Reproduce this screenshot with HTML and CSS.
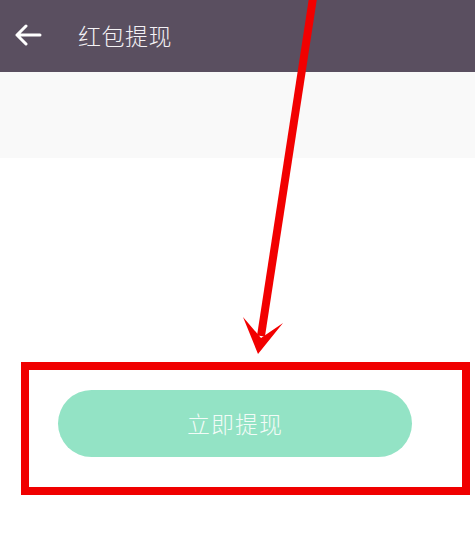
FILE: index.html
```html
<!DOCTYPE html>
<html lang="zh">
<head>
<meta charset="utf-8">
<link rel="stylesheet" href="styles.css">
</head>
<body>
<div class="page">
  <header class="topbar">
    <svg class="back" width="28" height="22" viewBox="0 0 28 22">
      <path d="M26 11H3M12 2L3 11L12 20" fill="none" stroke="#fff" stroke-width="3" stroke-linecap="round" stroke-linejoin="round"/>
    </svg>
    <h1 class="title">红包提现</h1>
  </header>
  <div class="band"></div>
  <main class="content">
    <div class="highlight">
      <button class="btn">立即提现</button>
    </div>
  </main>
  <svg class="annot" width="475" height="536" viewBox="0 0 475 536">
    <line x1="313" y1="-2" x2="261" y2="336" stroke="#f20000" stroke-width="8"/>
    <path d="M243 317 L261 338 L283 323 L258 354 Z" fill="#f20000"/>
  </svg>
</div>
</body>
</html>
```

FILE: styles.css
```css
* { box-sizing: border-box; }
html, body { margin: 0; padding: 0; }
body {
  width: 475px;
  height: 536px;
  background: #ffffff;
  font-family: "Noto Sans CJK SC", "Noto Sans", sans-serif;
  overflow: hidden;
}
.page {
  position: relative;
  width: 475px;
  height: 536px;
}
.topbar {
  height: 72px;
  background: #5a4f60;
  display: flex;
  align-items: center;
  padding-left: 14px;
  padding-bottom: 2px;
}
.back { display: block; }
.title {
  margin: 0 0 0 36px;
  color: #f4f2f5;
  font-size: 23px;
  font-weight: 300;
  letter-spacing: 0.5px;
  line-height: 1;
}
.band {
  height: 86px;
  background: #f9f9f9;
}
.content {
  padding-top: 204px;
  padding-left: 21px;
}
.highlight {
  width: 449px;
  height: 133px;
  border: 8px solid #f00000;
  padding: 20px 0 0 29px;
}
.btn {
  display: flex;
  align-items: center;
  justify-content: center;
  width: 354px;
  height: 67px;
  border: none;
  border-radius: 34px;
  background: #93e3c5;
  color: #f2fbf7;
  font-family: "Noto Sans CJK SC", "Noto Sans", sans-serif;
  font-size: 23px;
  font-weight: 300;
  letter-spacing: 1px;
  padding: 0 0 2px 0;
}
.annot {
  position: absolute;
  left: 0;
  top: 0;
  pointer-events: none;
}
```
